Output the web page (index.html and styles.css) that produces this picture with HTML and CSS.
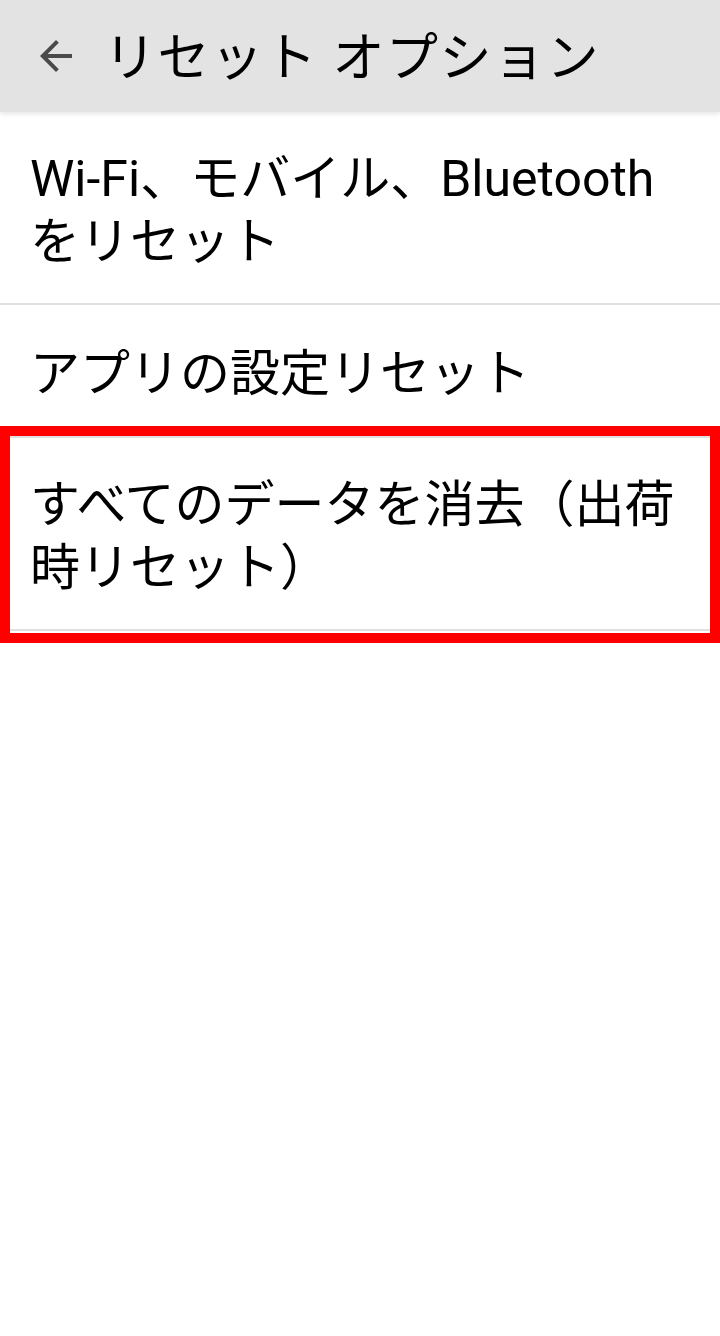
FILE: index.html
```html
<!DOCTYPE html>
<html lang="ja">
<head>
<meta charset="utf-8">
<link rel="stylesheet" href="styles.css">
</head>
<body>
<div class="app">
  <header class="bar">
    <svg class="back" viewBox="0 0 24 24" width="48" height="48"><path d="M20 11H7.83l5.59-5.59L12 4l-8 8 8 8 1.41-1.41L7.83 13H20v-2z" fill="#4a4a4a"/></svg>
    <h1 class="title">リセット オプション</h1>
  </header>
  <ul class="list">
    <li class="item item-tall">Wi-Fi、モバイル、Bluetooth<br>をリセット</li>
    <li class="item item-short">アプリの設定リセット</li>
    <li class="item item-tall item-mark">すべてのデータを消去（出荷<br>時リセット）<span class="mark"></span></li>
  </ul>
</div>
</body>
</html>
```
FILE: styles.css
```css
html, body {
  margin: 0;
  padding: 0;
  background: #ffffff;
}
.app {
  width: 720px;
  min-height: 1336px;
  font-family: Roboto, "Noto Sans CJK JP", sans-serif;
  color: #000000;
}
.bar {
  height: 112px;
  background: #e3e3e3;
  display: flex;
  align-items: center;
  box-shadow: 0 2px 5px rgba(0, 0, 0, 0.10);
  position: relative;
  z-index: 1;
}
.back {
  margin-left: 32px;
  flex: none;
}
.title {
  margin: 0 0 0 24px;
  font-size: 52px;
  font-weight: 400;
  line-height: 1;
  padding-top: 6px;
  letter-spacing: 1.5px;
}
.list {
  list-style: none;
  margin: 0;
  padding: 0;
}
.item {
  padding: 0 30px;
  font-size: 50px;
  line-height: 63px;
  border-bottom: 2px solid #e0e0e0;
  box-sizing: border-box;
  position: relative;
}
.item-tall {
  height: 193px;
  padding-top: 36px;
}
.item-short {
  height: 133px;
  padding-top: 38px;
}
.mark {
  position: absolute;
  left: 0;
  right: 0;
  top: -12px;
  bottom: -14px;
  border: 10px solid #ff0000;
}
```
